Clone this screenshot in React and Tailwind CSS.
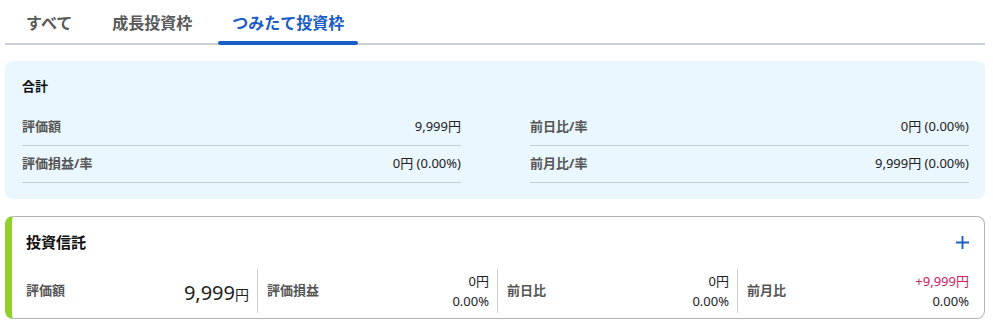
import { useState } from 'react';

const tabs = ["すべて", "成長投資枠", "つみたて投資枠"];

const summaryLeft = [
    { label: "評価額", value: "9,999円" },
    { label: "評価損益/率", value: "0円 (0.00%)" },
];

const summaryRight = [
    { label: "前日比/率", value: "0円 (0.00%)" },
    { label: "前月比/率", value: "9,999円 (0.00%)" },
];

function SummaryRow({ label, value }) {
    return (
        <div className="flex items-center justify-between h-[37px] border-b border-[#c3cdd6]">
            <span className="text-[13px] font-bold text-[#555]">{label}</span>
            <span className="text-[13px] text-[#222]">{value}</span>
        </div>
    );
}

function Metric({ label, top, bottom, topClass = "text-[#222]" }) {
    return (
        <div className="flex items-center justify-between h-[44px] border-l border-[#cfcfcf] pl-[9px] pr-2">
            <span className="text-[13px] font-bold text-[#555]">{label}</span>
            <div className="flex flex-col items-end text-[13px] leading-[20px]">
                <span className={topClass}>{top}</span>
                <span className="text-[#222]">{bottom}</span>
            </div>
        </div>
    );
}

export default function App() {
    const [active, setActive] = useState(2);

    return (
        <div
            className="w-[993px] h-[325px] bg-white overflow-hidden"
            style={{ fontFamily: '"Noto Sans", "Noto Sans CJK JP", sans-serif' }}
        >
            {/* タブ */}
            <div className="mx-[5px] w-[980px] flex gap-3 pl-[7px] border-b-2 border-[#cbd0d6] h-[45px]">
                {tabs.map((t, i) => (
                    <button
                        key={t}
                        onClick={() => setActive(i)}
                        className={`relative px-[14px] text-[16px] font-bold leading-none ${i === active ? "text-[#1a5dc4]" : "text-[#5a5a5a]"}`}
                    >
                        <span className="relative top-[1px]">{t}</span>
                        {i === active && (
                            <span className="absolute left-0 right-0 -bottom-[2px] h-[4px] rounded-full bg-[#1a5dc4]" />
                        )}
                    </button>
                ))}
            </div>

            {/* 合計 */}
            <div className="mx-[5px] w-[980px] mt-[16px] rounded-lg bg-[#eaf7fe] pl-[17px] pr-4 pt-[15px] pb-4">
                <div className="text-[13px] font-bold text-[#111] leading-[20px] h-[33px]">合計</div>
                <div className="grid grid-cols-2 gap-x-[69px]">
                    <div>
                        {summaryLeft.map(r => <SummaryRow key={r.label} {...r} />)}
                    </div>
                    <div>
                        {summaryRight.map(r => <SummaryRow key={r.label} {...r} />)}
                    </div>
                </div>
            </div>

            {/* 投資信託 */}
            <div className="mx-[5px] w-[980px] mt-[17px] rounded-lg border border-[#b4b4b4] border-l-[7px] border-l-[#8fd02a] pl-[14px] pr-[14px] pt-[13px] pb-[5px]">
                <div className="flex items-center justify-between h-[24px]">
                    <span className="text-[15px] font-bold text-[#111]">投資信託</span>
                    <svg width="15" height="15" viewBox="0 0 16 16">
                        <path d="M8 1v14M1 8h14" stroke="#1b5fc9" strokeWidth="2" />
                    </svg>
                </div>
                <div className="mt-[15px] grid grid-cols-[231px_240px_240px_240px]">
                    <div className="flex items-center justify-between h-[44px] pr-2">
                        <span className="text-[13px] font-bold text-[#555]">評価額</span>
                        <span className="text-[#222] mt-[4px]">
                            <span className="text-[20px]">9,999</span>
                            <span className="text-[14px]">円</span>
                        </span>
                    </div>
                    <Metric label="評価損益" top="0円" bottom="0.00%" />
                    <Metric label="前日比" top="0円" bottom="0.00%" />
                    <Metric label="前月比" top="+9,999円" bottom="0.00%" topClass="text-[#d0205f]" />
                </div>
            </div>
        </div>
    );
}
